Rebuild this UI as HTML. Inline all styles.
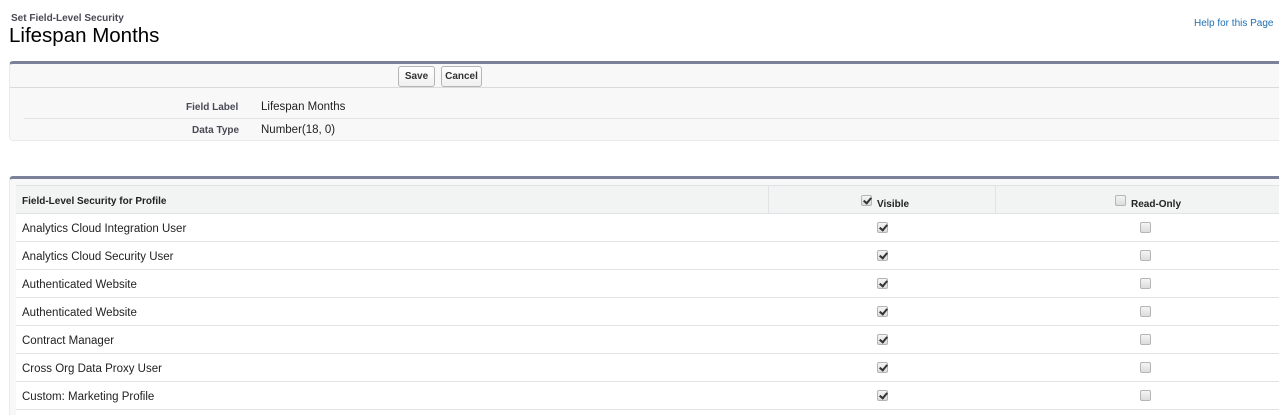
<!DOCTYPE html>
<html style="height:415px;overflow:hidden"><head><style>
html{overflow:hidden}
body{margin:0;background:#fff;font-family:"Liberation Sans",Arial,sans-serif;color:#222;width:1279px;height:415px;overflow:hidden;position:relative}
.a{position:absolute}
.cb{position:absolute;width:11px;height:11px;border:1px solid #b5b5b5;border-radius:2px;background:linear-gradient(#f4f4f4,#dcdcdc);box-sizing:border-box}
.cb.c::after{content:"";position:absolute;left:3px;top:0px;width:3px;height:6px;border:solid #333;border-width:0 2px 2px 0;transform:rotate(40deg)}
.row{position:absolute;left:16px;width:1263px;height:27px;border-bottom:1px solid #e3e3e3;background:#fff;font-size:11.5px}
.row span{position:absolute;left:6px;top:9px}
.btn{position:absolute;top:66px;height:21px;border:1px solid #b5b5b5;border-radius:3px;background:linear-gradient(#fff,#f0f0f0);font-size:10px;font-weight:bold;box-sizing:border-box;text-align:center;line-height:19px;color:#333}
</style></head><body>
<div class="a" style="left:11px;top:13px;font-size:10px;font-weight:bold;color:#4a4a56">Set Field-Level Security</div>
<div class="a" style="left:9px;top:24px;font-size:20.5px;color:#000">Lifespan Months</div>
<div class="a" style="left:1194px;top:18px;font-size:10px;color:#1f6fb5">Help for this Page</div>

<div class="a" style="left:9px;top:61px;width:1270px;height:80px;background:#f8f8f8;border-top:3px solid #7b8198;border-left:1px solid #eaeaea;border-bottom:1px solid #eaeaea;border-radius:4px 0 0 4px;box-sizing:border-box"></div>
<div class="a" style="left:10px;top:87px;width:1269px;height:1px;background:#dbdbdb"></div>
<div class="btn" style="left:398px;width:37px">Save</div>
<div class="btn" style="left:441px;width:41px">Cancel</div>
<div class="a" style="left:24px;top:118px;width:1255px;height:1px;background:#e3e3e3"></div>
<div class="a" style="left:186px;top:102px;font-size:10px;font-weight:bold;color:#4a4a56">Field Label</div>
<div class="a" style="left:261px;top:101px;font-size:11.5px">Lifespan Months</div>
<div class="a" style="left:192px;top:125px;font-size:10px;font-weight:bold;color:#4a4a56">Data Type</div>
<div class="a" style="left:261px;top:124px;font-size:11.5px">Number(18, 0)</div>

<div class="a" style="left:9px;top:176px;width:1270px;height:239px;background:#f8f8f8;border-top:3px solid #7b8198;border-left:1px solid #eaeaea;border-radius:4px 0 0 0;box-sizing:border-box"></div>
<div class="a" style="left:16px;top:185px;width:1263px;height:29px;background:#f2f3f3;border-top:1px solid #e0e3e5;border-bottom:1px solid #e0e3e5;box-sizing:border-box;font-size:10px;font-weight:bold">
<span class="a" style="left:6px;top:10px">Field-Level Security for Profile</span>
<div class="a" style="left:752px;top:0;width:1px;height:28px;background:#e0e3e5"></div>
<div class="a" style="left:979px;top:0;width:1px;height:28px;background:#e0e3e5"></div>
<div class="cb c" style="left:845px;top:9px"></div><span class="a" style="left:861px;top:13px">Visible</span>
<div class="cb" style="left:1099px;top:9px"></div><span class="a" style="left:1115px;top:13px">Read-Only</span>
</div>

<div class="row" style="top:214px"><span>Analytics Cloud Integration User</span><div class="cb c" style="left:861px;top:8px"></div><div class="cb" style="left:1124px;top:8px"></div></div>
<div class="row" style="top:242px"><span>Analytics Cloud Security User</span><div class="cb c" style="left:861px;top:8px"></div><div class="cb" style="left:1124px;top:8px"></div></div>
<div class="row" style="top:270px"><span>Authenticated Website</span><div class="cb c" style="left:861px;top:8px"></div><div class="cb" style="left:1124px;top:8px"></div></div>
<div class="row" style="top:298px"><span>Authenticated Website</span><div class="cb c" style="left:861px;top:8px"></div><div class="cb" style="left:1124px;top:8px"></div></div>
<div class="row" style="top:326px"><span>Contract Manager</span><div class="cb c" style="left:861px;top:8px"></div><div class="cb" style="left:1124px;top:8px"></div></div>
<div class="row" style="top:354px"><span>Cross Org Data Proxy User</span><div class="cb c" style="left:861px;top:8px"></div><div class="cb" style="left:1124px;top:8px"></div></div>
<div class="row" style="top:382px"><span>Custom: Marketing Profile</span><div class="cb c" style="left:861px;top:8px"></div><div class="cb" style="left:1124px;top:8px"></div></div>
<div class="row" style="top:410px;height:5px;border:0"></div>
</body></html>
